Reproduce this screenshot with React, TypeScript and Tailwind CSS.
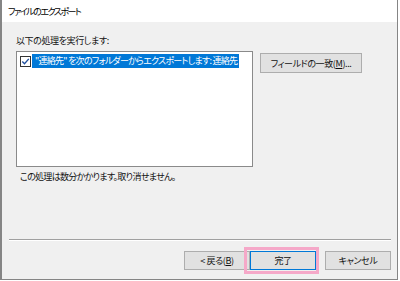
import React from 'react';

const jp = "[font-family:'Noto_Sans_CJK_JP','Noto_Sans',sans-serif] [font-feature-settings:'palt']";

const WinButton: React.FC<{ className?: string; children: React.ReactNode }> = ({ className = '', children }) => (
  <button
    className={`flex items-center justify-center bg-[#e1e1e1] border text-[9px] leading-none tracking-[-0.4px] text-[#111] ${className}`}
  >
    {children}
  </button>
);

export default function App() {
  return (
    <div className={`w-[400px] h-[281px] bg-white ${jp}`}>
      <div className="w-[398px] h-[280px] flex flex-col bg-[#f0f0f0] border-l-2 border-r border-b border-[#858585]">
        {/* title bar */}
        <div className="h-[22px] bg-white flex items-center pl-[6px] pt-[2px] text-[9px] tracking-[-1.5px] text-black">
          ファイルのエクスポート
        </div>

        <div className="px-[14px]">
          <div className="mt-[13px] h-[12px] leading-[12px] text-[9px] tracking-[-0.4px] text-[#111]">以下の処理を実行します:</div>

          <div className="mt-[4px] flex items-start gap-[7px]">
            <div className="w-[237px] h-[116px] bg-white border border-[#8a8a8a] pt-[2px] overflow-hidden">
              <div className="flex items-center h-[14px]">
                <div className="ml-[3px] w-[11px] h-[11px] border border-[#333] bg-white flex items-center justify-center">
                  <svg width="9" height="9" viewBox="0 0 9 9">
                    <path d="M1.3 4.6 L3.5 6.8 L7.8 1.9" fill="none" stroke="#1f4f9e" strokeWidth="1.4" />
                  </svg>
                </div>
                <div className="ml-[1px] h-[14px] w-[207px] bg-[#0078d7] text-white text-[9px] leading-[14px] pl-[3px] tracking-[-0.75px] whitespace-nowrap overflow-hidden">
                  "連絡先" を次のフォルダーからエクスポートします: 連絡先
                </div>
              </div>
            </div>
            <WinButton className="mt-[2px] w-[102px] h-[20px] border-[#adadad]">
              フィールドの一致(<u>M</u>)...
            </WinButton>
          </div>

          <div className="mt-[4px] ml-[4px] h-[12px] leading-[12px] text-[9px] tracking-[-0.7px] text-[#111]">
            この処理は数分かかります。取り消せません。
          </div>
        </div>

        <div className="mt-[56px] ml-[7px] w-[382px] border-t border-[#a0a0a0] border-b border-b-white" />

        <div className="mt-[10px] flex justify-end pr-[6px]">
          <WinButton className="w-[66px] h-[19px] border-[#adadad]">
            &lt; 戻る(<u>B</u>)
          </WinButton>
          <div className="relative">
            <WinButton className="w-[66px] h-[19px] border-[#0078d7]">完了</WinButton>
            <div className="absolute -left-[6px] -right-[3px] -top-[4px] -bottom-[4px] border-[3px] border-[#f5a8c8] pointer-events-none" />
          </div>
          <WinButton className="ml-[9px] w-[66px] h-[19px] border-[#adadad]">キャンセル</WinButton>
        </div>
      </div>
    </div>
  );
}
